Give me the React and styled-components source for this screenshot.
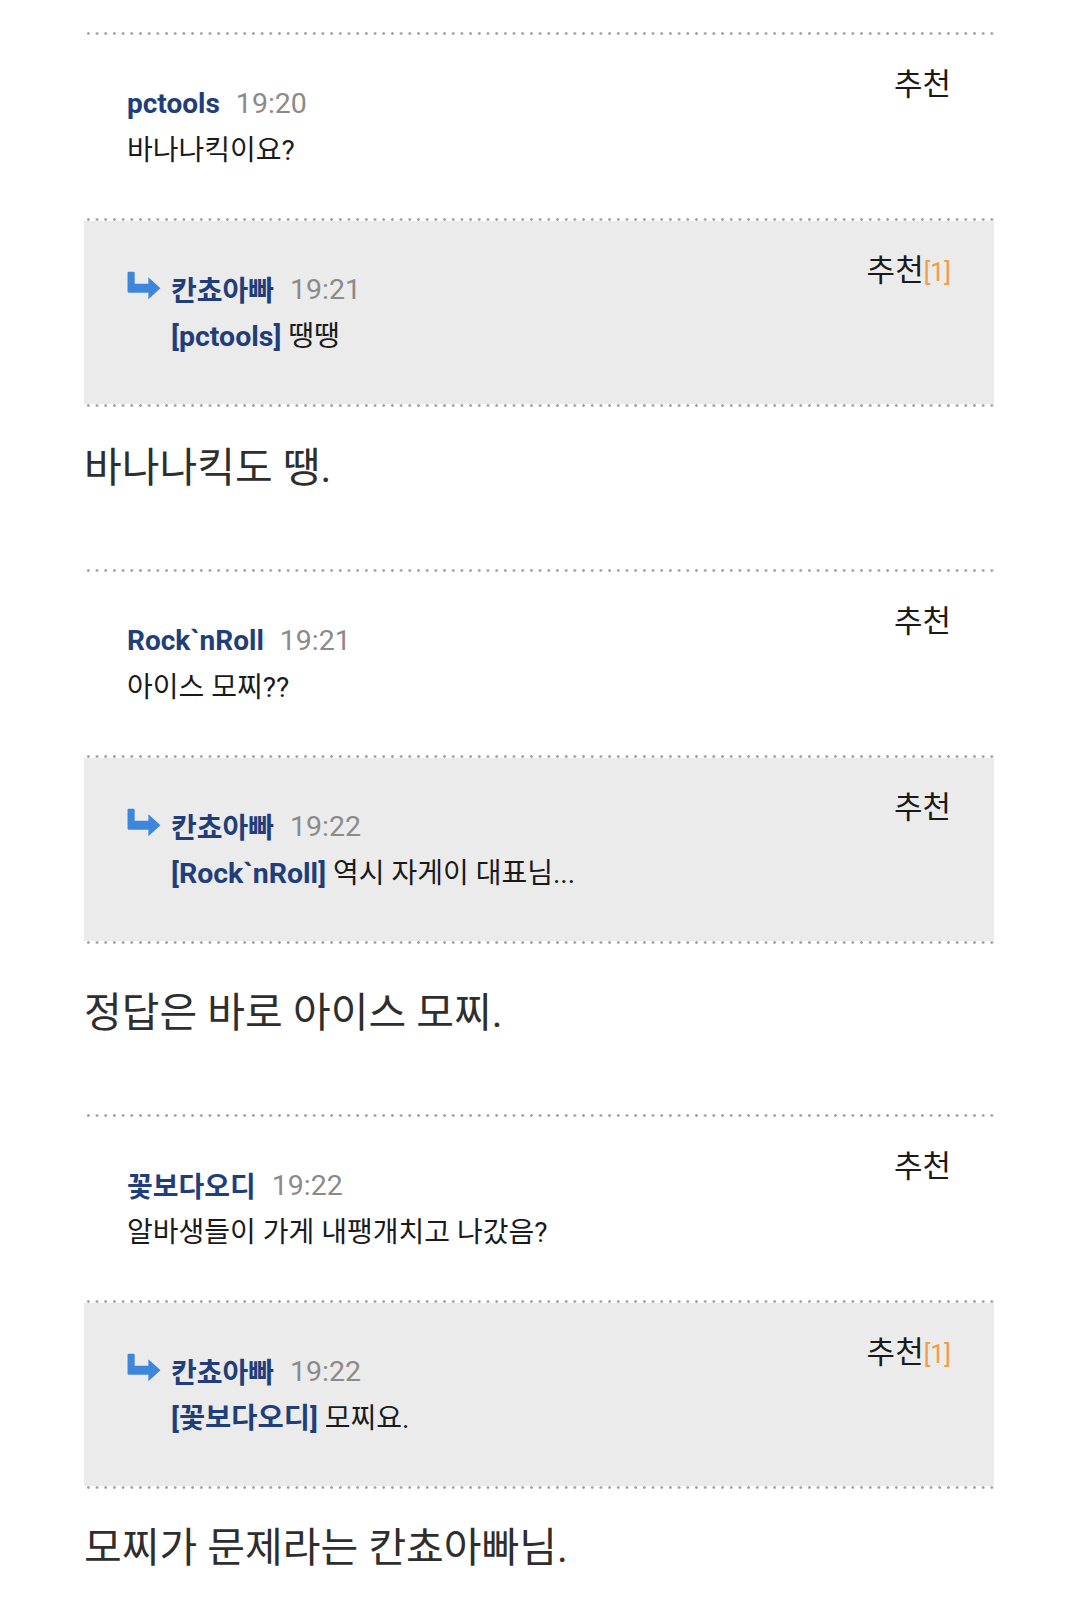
import React from 'react';
import styled, { createGlobalStyle } from 'styled-components';

const GlobalStyle = createGlobalStyle`
  body {
    margin: 0;
    background: #fff;
    font-family: Roboto, "Noto Sans CJK KR", sans-serif;
  }
`;

const thread = [
  { type: 'comment', name: 'pctools', time: '19:20', text: '바나나킥이요?' },
  { type: 'reply', name: '칸쵸아빠', time: '19:21', to: 'pctools', text: '땡땡', likes: 1 },
  { type: 'post', text: '바나나킥도 땡.', top: 37 },
  { type: 'comment', name: 'Rock`nRoll', time: '19:21', text: '아이스 모찌??' },
  { type: 'reply', name: '칸쵸아빠', time: '19:22', to: 'Rock`nRoll', text: '역시 자게이 대표님...' },
  { type: 'post', text: '정답은 바로 아이스 모찌.', top: 45 },
  { type: 'comment', name: '꽃보다오디', time: '19:22', text: '알바생들이 가게 내팽개치고 나갔음?' },
  { type: 'reply', name: '칸쵸아빠', time: '19:22', to: '꽃보다오디', text: '모찌요.', likes: 1 },
  { type: 'post', text: '모찌가 문제라는 칸쵸아빠님.', top: 35 },
];

const ReplyArrow = () => (
  <ArrowSvg width="34" height="29" viewBox="0 0 31 26">
    <path
      d="M0.5 1.5 Q0.5 0.5 1.5 0.5 H6 Q7 0.5 7 1.5 V11.5 H19.5 V5.5 L30.5 15.5 L19.5 25.5 V19.5 H1.5 Q0.5 19.5 0.5 18.5 Z"
      fill="#3d86dc"
    />
  </ArrowSvg>
);

const CommentBlock = ({ item }) => {
  const reply = item.type === 'reply';
  return (
    <>
      <Rule />
      <Comment $reply={reply}>
        <Main>
          <Meta>
            {reply && <ReplyArrow />}
            <Name>{item.name}</Name>
            <Time>{item.time}</Time>
          </Meta>
          <Text $indent={reply}>
            {item.to && <Mention>[{item.to}]</Mention>}
            {item.to ? ' ' : ''}
            {item.text}
          </Text>
        </Main>
        <Recommend>
          추천{item.likes ? <Count>[{item.likes}]</Count> : null}
        </Recommend>
      </Comment>
      {reply && <Rule />}
    </>
  );
};

const App = () => {
  return (
    <>
      <GlobalStyle />
      <Page>
        {thread.map((item, i) =>
          item.type === 'post' ? (
            <Post key={i} $top={item.top}>
              {item.text}
            </Post>
          ) : (
            <CommentBlock key={i} item={item} />
          )
        )}
      </Page>
    </>
  );
};

export default App;

const Page = styled.div`
  width: 910px;
  margin: 0 auto;
  padding-top: 32px;
`;

const Rule = styled.div`
  height: 3px;
  background-image: radial-gradient(circle, #a2a2a2 1.1px, transparent 1.6px);
  background-size: 8.7px 3px;
  background-repeat: repeat-x;
`;

const Comment = styled.div`
  display: flex;
  justify-content: space-between;
  align-items: flex-start;
  height: 183px;
  box-sizing: border-box;
  padding: 0 43px 0 43px;
  background: ${({ $reply }) => ($reply ? '#ebebeb' : '#fff')};
`;

const Main = styled.div`
  display: flex;
  flex-direction: column;
  gap: 12px;
  padding-top: 50px;
`;

const Meta = styled.div`
  display: flex;
  align-items: center;
  height: 36px;
`;

const ArrowSvg = styled.svg`
  flex-shrink: 0;
  margin-right: 10px;
  margin-bottom: 7px;
`;

const Name = styled.span`
  font-size: 28px;
  font-weight: 700;
  color: #1f3e7a;
`;

const Time = styled.span`
  margin-left: 16px;
  font-size: 28.5px;
  color: #8a8a8a;
`;

const Text = styled.div`
  margin-left: ${({ $indent }) => ($indent ? '44px' : '0')};
  font-size: 28px;
  line-height: 36px;
  color: #1a1a1a;
`;

const Mention = styled.span`
  font-size: 28.5px;
  font-weight: 700;
  color: #1f3e7a;
`;

const Recommend = styled.div`
  padding-top: 32px;
  font-size: 31px;
  line-height: 36px;
  color: #1a1a1a;
`;

const Count = styled.span`
  font-size: 25px;
  color: #f29c45;
`;

const Post = styled.p`
  margin: 0;
  box-sizing: border-box;
  padding: ${({ $top }) => $top}px 0 77px 0;
  font-size: 41px;
  line-height: 48px;
  color: #2e2e2e;
`;
